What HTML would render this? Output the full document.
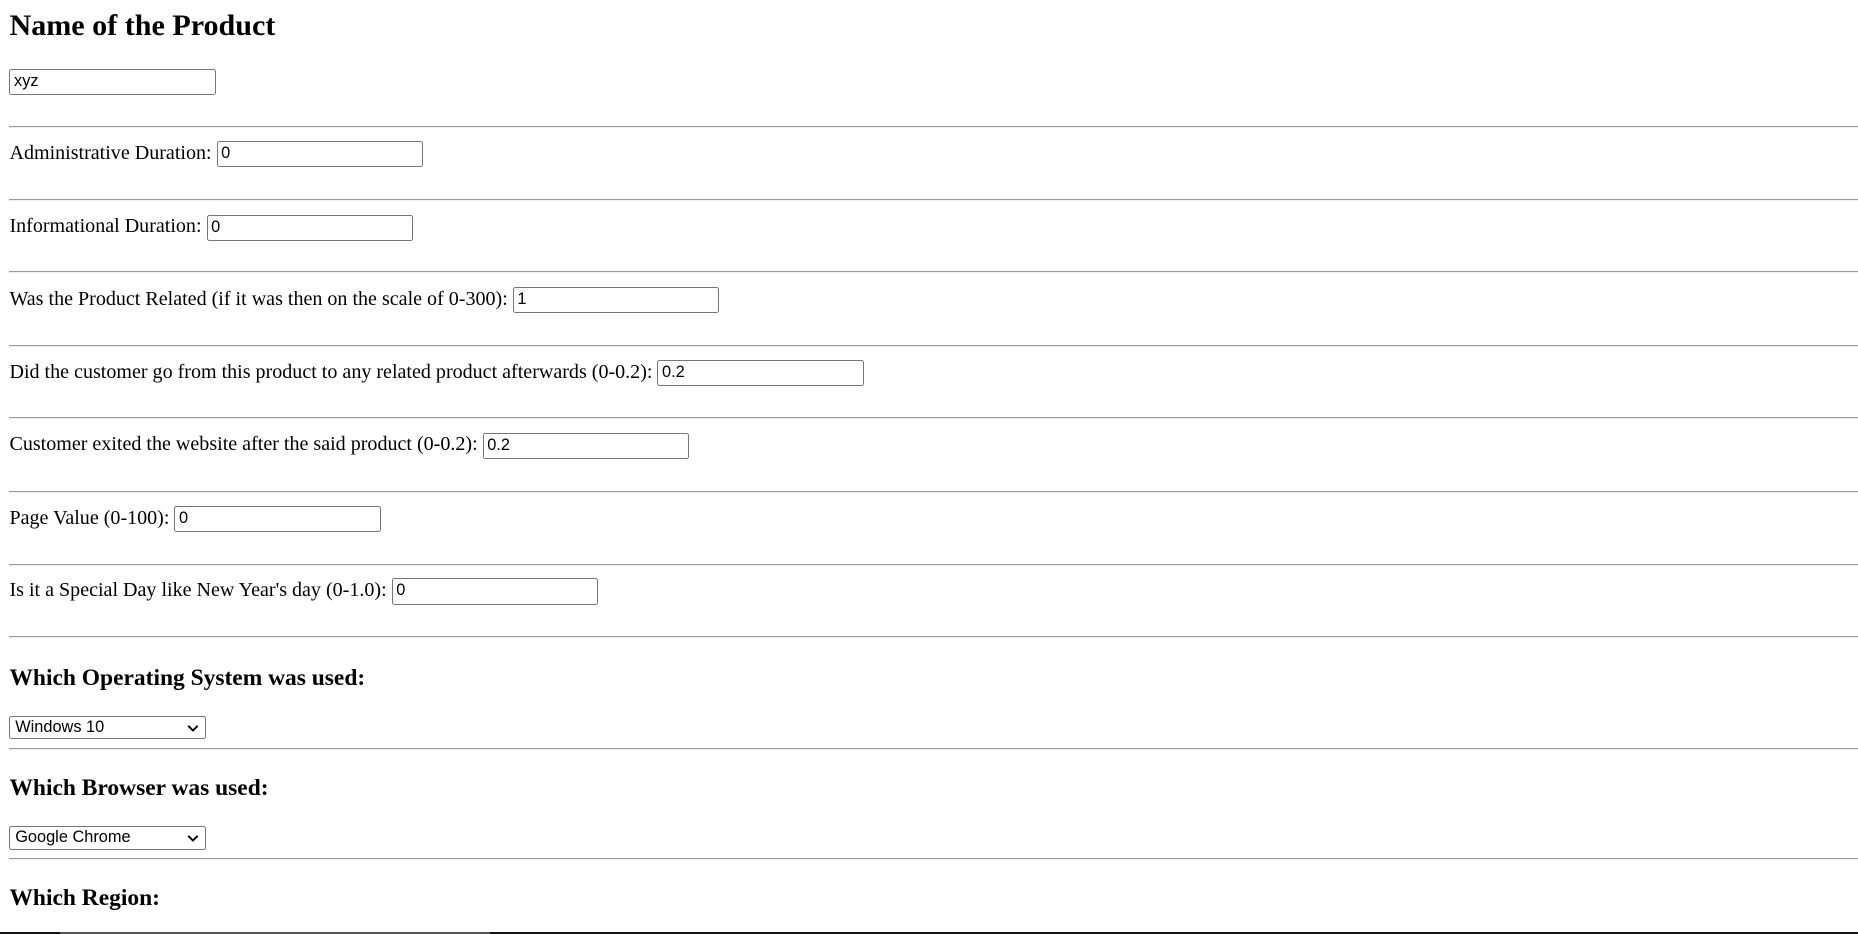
<!DOCTYPE html>
<html><head><meta charset="utf-8"><style>
html,body{margin:0;padding:0;background:#fff;overflow:hidden;width:1858px;height:934px}
#w{zoom:1.185;position:relative;width:1568px;height:788px;font-family:"Liberation Serif",serif;font-size:16.92px;color:#000}
.a{position:absolute;left:8px;white-space:nowrap}
.hr{position:absolute;left:8px;right:0;height:0;border-top:1px solid #9a9a9a;border-bottom:1px solid #eee}
.in{display:inline-block;vertical-align:middle;box-sizing:border-box;width:174px;height:22px;border:1px solid #767676;border-radius:2px;font-family:"Liberation Sans",sans-serif;font-size:13.8px;line-height:20px;padding-left:3px;text-align:left}
.row{line-height:23px;height:22px}
h2,h3{margin:0;font-weight:bold}
h2{font-size:25.4px;line-height:28px}
h3{font-size:19.8px;line-height:22px}
.sel{position:absolute;left:8px;box-sizing:border-box;width:166px;height:20px;border:1px solid #767676;border-radius:2px;font-family:"Liberation Sans",sans-serif;font-size:13.8px;line-height:18px;padding-left:4px}
.sel svg{position:absolute;right:5px;top:6px}
#bar{position:fixed;left:0;bottom:0;width:1858px;height:2px;background:#111}
#bar i{position:absolute;left:60px;width:430px;height:2px;background:#555}
</style></head><body>
<div id="w">
<h2 class="a" style="top:8px">Name of the Product</h2>
<div class="a row" style="top:57px"><span class="in">xyz</span></div>
<div class="hr" style="top:106px"></div>
<div class="a row" style="top:118px">Administrative Duration: <span class="in">0</span></div>
<div class="hr" style="top:168px"></div>
<div class="a row" style="top:180px">Informational Duration: <span class="in">0</span></div>
<div class="hr" style="top:229px"></div>
<div class="a row" style="top:241px">Was the Product Related (if it was then on the scale of 0-300): <span class="in">1</span></div>
<div class="hr" style="top:291px"></div>
<div class="a row" style="top:303px">Did the customer go from this product to any related product afterwards (0-0.2): <span class="in">0.2</span></div>
<div class="hr" style="top:352px"></div>
<div class="a row" style="top:364px">Customer exited the website after the said product (0-0.2): <span class="in">0.2</span></div>
<div class="hr" style="top:414px"></div>
<div class="a row" style="top:426px">Page Value (0-100): <span class="in">0</span></div>
<div class="hr" style="top:476px"></div>
<div class="a row" style="top:487px">Is it a Special Day like New Year's day (0-1.0): <span class="in">0</span></div>
<div class="hr" style="top:537px"></div>
<h3 class="a" style="top:561px">Which Operating System was used:</h3>
<div class="sel" style="top:604px">Windows 10<svg width="10" height="7" viewBox="0 0 10 7"><path d="M1 1.5L5 5.5L9 1.5" fill="none" stroke="#000" stroke-width="1.6"/></svg></div>
<div class="hr" style="top:631px"></div>
<h3 class="a" style="top:654px">Which Browser was used:</h3>
<div class="sel" style="top:697px">Google Chrome<svg width="10" height="7" viewBox="0 0 10 7"><path d="M1 1.5L5 5.5L9 1.5" fill="none" stroke="#000" stroke-width="1.6"/></svg></div>
<div class="hr" style="top:724px"></div>
<h3 class="a" style="top:747px">Which Region:</h3>
</div>
<div id="bar"><i></i></div>
</body></html>
